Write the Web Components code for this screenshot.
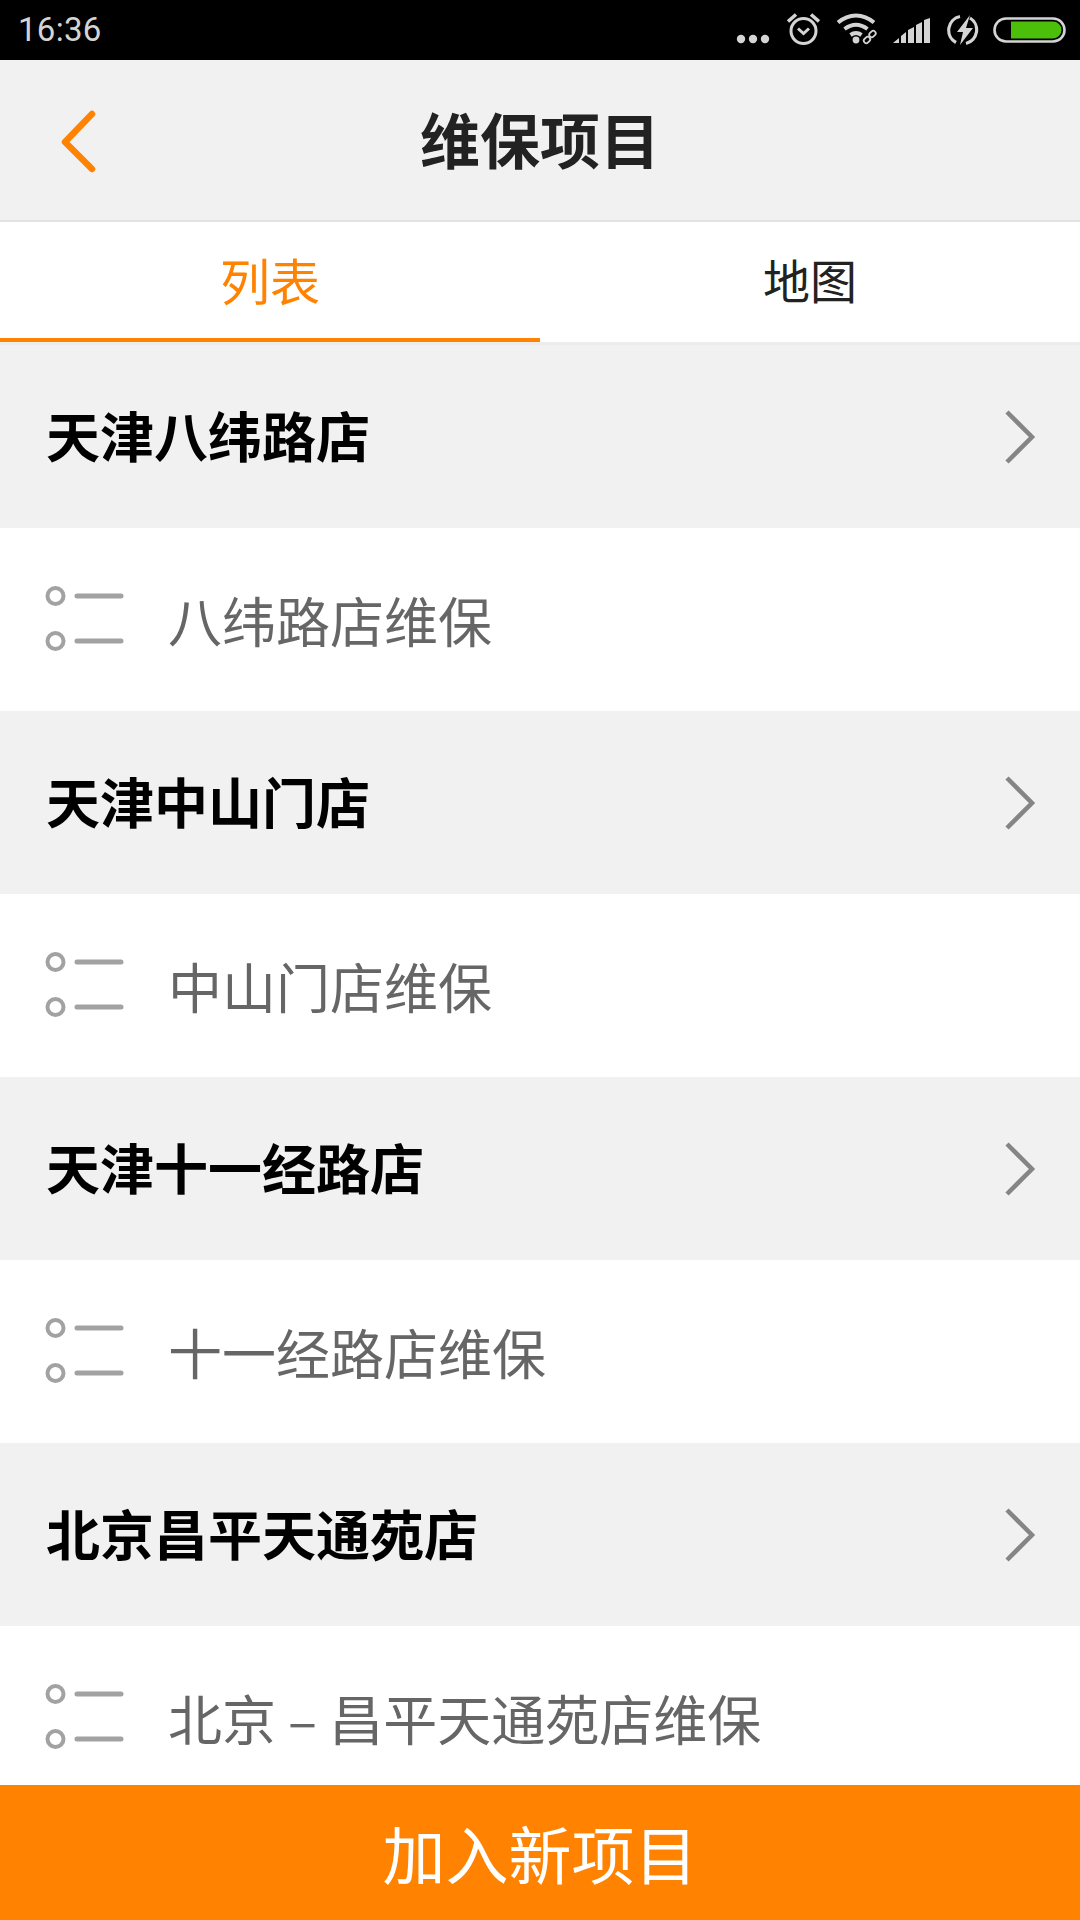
<!DOCTYPE html>
<html lang="zh-CN"><head><meta charset="utf-8"><title>维保项目</title>
<style>
html,body{margin:0;padding:0;background:#fff}
body{width:1080px;height:1920px;overflow:hidden;display:flex;flex-direction:column;font-family:"Noto Sans CJK SC","Noto Sans",sans-serif}
main-list{flex:1;min-height:0}
</style></head><body>
<status-bar time="16:36"></status-bar>
<nav-bar>维保项目</nav-bar>
<tab-bar></tab-bar>
<main-list>
<shop-row>天津八纬路店</shop-row><service-row>八纬路店维保</service-row>
<shop-row>天津中山门店</shop-row><service-row>中山门店维保</service-row>
<shop-row>天津十一经路店</shop-row><service-row>十一经路店维保</service-row>
<shop-row>北京昌平天通苑店</shop-row><service-row>北京 – 昌平天通苑店维保</service-row>
</main-list>
<add-button>加入新项目</add-button>
<script>
function def(name,html,init){customElements.define(name,class extends HTMLElement{constructor(){super();this.attachShadow({mode:'open'}).innerHTML=html;}connectedCallback(){init&&init(this)}})}
def('status-bar',`<style>
:host{display:flex;height:60px;background:#000;align-items:center;justify-content:space-between;padding:0 14px 0 18px;box-sizing:border-box;color:#d4d4d4}
.t{font:33px/60px Roboto,sans-serif;letter-spacing:.3px}
.i{display:flex;align-items:center;gap:16px}svg{display:block;flex:none}
</style><span class="t"></span><div class="i">
<svg width="34" height="60" viewBox="736 0 34 60"><g fill="#d4d4d4"><circle cx="741" cy="39" r="4.2"/><circle cx="753" cy="39" r="4.2"/><circle cx="765" cy="39" r="4.2"/></g></svg>
<svg width="34" height="60" viewBox="786 0 34 60"><g fill="none" stroke="#d4d4d4"><circle cx="803.5" cy="31" r="12.5" stroke-width="3"/><path d="M798 28.5l5.5 5 5.5-5" stroke-width="3"/><path d="M788 21.5l8-7M819 21.5l-8-7" stroke-width="3.6"/></g></svg>
<svg width="42" height="60" viewBox="836 0 42 60"><g fill="none" stroke="#d4d4d4" stroke-width="4"><path d="M838 22.5C849 13 863 13 874 22.5"/><path d="M844.5 29C852 23.5 860 23.5 867.5 29"/><path d="M850.5 35C854 32.5 858 32.5 861.5 35"/></g><circle cx="856" cy="40" r="3.4" fill="#d4d4d4"/><g fill="none" stroke="#d4d4d4" stroke-width="1.8"><rect x="869" y="31.5" width="7" height="5" rx="2.5" transform="rotate(-45 872.5 34)"/><rect x="863.5" y="37.5" width="7" height="5" rx="2.5" transform="rotate(-45 867 40)"/></g></svg>
<svg width="39" height="60" viewBox="892 0 39 60" style="margin-left:-2px"><path fill="#d4d4d4" d="M893 43l6-5v5zM901 36l5-4v11h-5zM908 30l6-3v16h-6zM916 25l6-3v21h-6zM924 20l6-2v25h-6z"/></svg>
<svg width="32" height="60" viewBox="947 0 32 60"><path d="M956 42.500A14 14 0 0 1 960 16.500M970 18A14 14 0 0 1 966 43.500" fill="none" stroke="#d4d4d4" stroke-width="3.2"/><path d="M970 15L957 32h6l-3 13 13-17h-7z" fill="#d4d4d4"/></svg>
<svg width="73" height="60" viewBox="993 0 73 60" style="margin-left:-2px"><rect x="994.500" y="18.500" width="70" height="23" rx="11.500" fill="none" stroke="#d4d4d4" stroke-width="2.600"/><path d="M1011 21.500h42a8.500 8.500 0 0 1 0 17h-42z" fill="#4cbf0a"/></svg>
</div>`,el=>el.shadowRoot.querySelector('.t').textContent=el.getAttribute('time'));
def('nav-bar',`<style>
:host{display:block;position:relative;height:162px;background:#f1f1f1;border-bottom:2px solid #e2e2e2;box-sizing:border-box;text-align:center;font:bold 60px/156px "Noto Sans CJK SC",sans-serif;color:#222}
svg{position:absolute;left:58px;top:47px}
</style><svg width="42" height="68" viewBox="0 0 42 68"><path d="M34 7L7 35l27 27" fill="none" stroke="#ff8200" stroke-width="6.500" stroke-linecap="round" stroke-linejoin="round"/></svg><slot></slot>`);
def('tab-bar',`<style>
:host{display:flex;height:123px;background:#fff;box-sizing:border-box;border-bottom:3px solid #ececec;font:50px/114px "Noto Sans CJK SC",sans-serif}
div{flex:1;text-align:center;color:#222;box-sizing:border-box;height:120px}
div+div{font-size:47px}
.on{color:#ff8200;border-bottom:4px solid #ff8200}
</style><div class="on">列表</div><div>地图</div>`);
def('main-list',`<style>:host{display:block;overflow:hidden}</style><slot></slot>`);
def('shop-row',`<style>
:host{display:flex;align-items:center;justify-content:space-between;height:183px;background:#f1f1f1;padding:0 44px 0 46px;box-sizing:border-box;font:bold 54px/1 "Noto Sans CJK SC",sans-serif;color:#000}
span{padding-bottom:4px}
svg{display:block}
</style><span><slot></slot></span><svg width="32" height="56" viewBox="0 0 32 56"><path d="M3 3l25 25L3 53" fill="none" stroke="#858585" stroke-width="4.500"/></svg>`);
def('service-row',`<style>
:host{display:flex;align-items:center;height:183px;background:#fff;padding-left:45px;box-sizing:border-box;font:54px/1 "Noto Sans CJK SC",sans-serif;color:#666}
svg{display:block;margin-right:43px;flex:none}
</style><svg width="80" height="70" viewBox="0 0 80 70"><g fill="none" stroke="#a2a2a2"><circle cx="10.500" cy="11" r="8" stroke-width="4"/><circle cx="10.500" cy="56" r="8" stroke-width="4"/><path d="M32 11h44M32 56h44" stroke-width="5" stroke-linecap="round"/></g></svg><span><slot></slot></span>`);
def('add-button',`<style>
:host{display:flex;align-items:center;justify-content:center;height:135px;padding-bottom:2px;box-sizing:border-box;background:#ff8200;color:#fff;font:63px/1 "Noto Sans CJK SC",sans-serif}
</style><slot></slot>`);
</script></body></html>
